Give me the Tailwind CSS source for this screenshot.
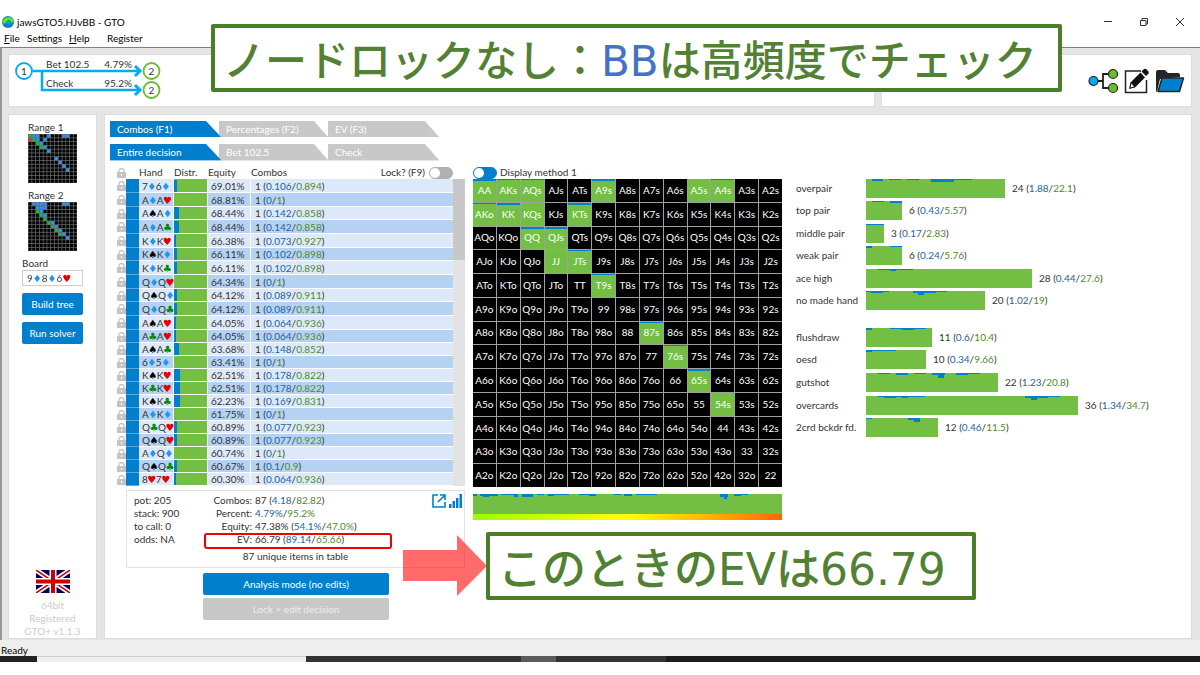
<!DOCTYPE html>
<html lang="ja">
<head>
  <meta charset="UTF-8">
  <meta name="viewport" content="width=device-width, initial-scale=1.0">
  <title>jawsGTO5.HJvBB - GTO</title>
  <script src="https://cdn.jsdelivr.net/npm/@tailwindcss/browser@4"></script>
</head>

<body class="relative bg-white min-h-screen flex flex-col pb-[13px] font-[Lato,'DejaVu_Sans','Noto_Sans_CJK_JP',sans-serif] text-[10px] leading-[13px] text-[#333]">

<!-- Shared symbols -->
<svg class="hidden">
  <symbol id="lock" viewBox="0 0 9 10"><path d="M2 5V3a2.5 2.5 0 0 1 5 0v2" fill="none" stroke="#c4c4c4" stroke-width="1.3"/><rect x="0" y="4" width="9" height="6" rx=".6" fill="#c4c4c4"/><rect x="4" y="6" width="1" height="2" fill="#fff"/></symbol>
</svg>

<!-- Title bar -->
<header class="pt-[14px]">
  <div class="flex items-center h-4 pl-[2px] pr-4">
    <svg class="w-3 h-3 mr-[3px]" viewBox="0 0 12 12"><circle cx="6" cy="6" r="6" fill="#0a7fd0"/><path d="M.3 6.500A6 6 0 0 1 11.900 5C10.500 7.500 9 7.500 8.500 5.500S5.500 4 4.500 6S1.500 8 .3 6.500z" fill="#5fe02c"/><path d="M5 7C5 5 8 5 8 7S5.500 9 5 7z" fill="#14a8c8"/></svg>
    <span class="text-black">jawsGTO5.HJvBB - GTO</span>
    <div class="ml-auto flex gap-[28px]">
      <button aria-label="Minimize"><svg class="w-2 h-2" viewBox="0 0 8 8"><path d="M0 3.500H8" stroke="#333"/></svg></button>
      <button aria-label="Restore"><svg class="w-2 h-2 overflow-visible" viewBox="0 0 8 8"><path d="M.5 2.500H6V7.500H.5zM2 2V.5H7.500V6H6" fill="none" stroke="#333"/></svg></button>
      <button aria-label="Close"><svg class="w-2 h-2" viewBox="0 0 8 8"><path d="M0 0L8 8M8 0L0 8" stroke="#333"/></svg></button>
    </div>
  </div>
  <nav class="flex items-center h-[17px] pl-1 text-black">
    <a href="#" class="w-[23px]"><u>F</u>ile</a>
    <a href="#" class="w-[42px]">Settings</a>
    <a href="#" class="w-[38px]"><u>H</u>elp</a>
    <a href="#">Register</a>
  </nav>
</header>

<!-- Workspace -->
<div class="flex-1 flex flex-col gap-[7px] bg-[#e5e5e5] border-t border-l-2 border-t-[#808080] border-l-[#999] pt-[6px] pl-[6px] pr-2 pb-px">

  <div class="flex gap-[6px]">
    <!-- Decision tree -->
    <section class="w-[867px] h-[53px] bg-white border border-[#ddd]">
      <svg class="w-[160px] h-[50px]" viewBox="9 55 160 50" font-size="10" fill="#333">
        <g fill="none" stroke="#00adef" stroke-width="2.500">
          <path d="M33 71H140M42 71V90H140"/>
          <path d="M135 66L140 71L135 76M135 85L140 90L135 95" stroke-width="3"/>
          <circle cx="24" cy="71" r="8" stroke-width="1.800"/>
        </g>
        <g fill="#fff" stroke="#6abd2e" stroke-width="1.800"><circle cx="151.500" cy="71" r="8"/><circle cx="151.500" cy="90" r="8"/></g>
        <text x="24" y="75" text-anchor="middle">1</text>
        <text x="151.500" y="75" text-anchor="middle">2</text>
        <text x="151.500" y="94" text-anchor="middle">2</text>
        <text x="46" y="68">Bet 102.5</text><text x="132" y="68" text-anchor="end">4.79%</text>
        <text x="46" y="87">Check</text><text x="132" y="87" text-anchor="end">95.2%</text>
      </svg>
    </section>

    <!-- Toolbar -->
    <section class="flex-1 flex items-center justify-end gap-[6px] pr-[6px] bg-white border border-[#ddd]">
      <button aria-label="Tree"><svg class="w-[30px] h-[26px]" viewBox="0 0 30 26"><path d="M8 13H15M21 6H15V20H21" fill="none" stroke="#222" stroke-width="1.800"/><circle cx="5.500" cy="13" r="4.500" fill="#00adef" stroke="#222" stroke-width="1.200"/><circle cx="25" cy="6" r="4.500" fill="#6abd2e" stroke="#222" stroke-width="1.200"/><circle cx="25" cy="20" r="4.500" fill="#6abd2e" stroke="#222" stroke-width="1.200"/></svg></button>
      <button aria-label="Edit"><svg class="w-[25px] h-[26px]" viewBox="0 0 25 26"><path d="M17 3H1.500V24.500H22.500V12" fill="none" stroke="#222" stroke-width="1.500"/><path d="M5 21L6.500 14.500L16.500 4.500L21 9.500L11 19.500z" fill="#111"/><path d="M17.500 3.500L20 1Q21 .3 22 1L24.500 3.500Q25 4.500 24.500 5.500L22 8z" fill="#111"/><path d="M6.500 19.500L7.500 15.500L10 18.500z" fill="#fff"/></svg></button>
      <button aria-label="Open"><svg class="w-[30px] h-[26px]" viewBox="0 0 30 26"><path d="M1 22V4Q1 2 3 2H10L13 5H23Q25 5 25 7V9L5 11L2 24Q1 24 1 22z" fill="#262626"/><path d="M7 10H28.500L24.500 23.500H3z" fill="#0080cc" stroke="#262626" stroke-width="1.500" stroke-linejoin="round"/></svg></button>
    </section>
  </div>

  <div class="flex-1 flex gap-[7px]">
    <!-- Sidebar -->
    <aside class="w-[89px] bg-white border border-[#ddd] px-[13px] pt-[6px] flex flex-col">
      <h2 class="pl-[6px]">Range 1</h2>
      <svg id="range1" class="w-[49px] h-[49px] ml-[6px]" viewBox="0 0 52 52"></svg>
      <h2 class="pl-[6px] mt-[6px]">Range 2</h2>
      <svg id="range2" class="w-[49px] h-[49px] ml-[6px]" viewBox="0 0 52 52"></svg>
      <label for="board" class="mt-[6px]">Board</label>
      <!-- the gradient colours the suits one by one -->
      <input id="board" type="text" value="9♦8♦6♥" class="w-full h-4 border border-[#ccc] pl-1 leading-[14px] text-transparent bg-clip-text bg-[linear-gradient(to_right,#333_10px,#1e96f5_10px,#1e96f5_19px,#333_19px,#333_25px,#1e96f5_25px,#1e96f5_34px,#333_34px,#333_40px,#e60000_40px)]">
      <button class="mt-[7px] h-[22px] rounded-[2px] bg-[#0080cc] text-white">Build tree</button>
      <button class="mt-[7px] h-[22px] rounded-[2px] bg-[#0080cc] text-white">Run solver</button>
      <div class="mt-auto text-center text-[#ccc] flex flex-col items-center">
        <svg class="w-[34px] h-[23px] mb-[6px]" viewBox="0 0 34 23">
          <path d="M0 0H34V23H0z" fill="#00005c"/>
          <path d="M0 0L34 23M34 0L0 23" stroke="#fff" stroke-width="5"/>
          <path d="M0 0L34 23M34 0L0 23" stroke="#d00000" stroke-width="1.500"/>
          <path d="M17 0V23M0 11.500H34" stroke="#fff" stroke-width="7"/>
          <path d="M17 0V23M0 11.500H34" stroke="#d00000" stroke-width="4"/>
        </svg>
        <p>64bit</p><p>Registered</p><p>GTO+ v1.1.3</p>
      </div>
    </aside>

    <!-- Analysis panel -->
    <main class="flex-1 bg-white border border-[#ddd] pt-[6px] pl-[5px]">
      <div class="flex text-white text-left">
        <button class="w-[109px] h-4 pl-[7px] text-left relative z-10"><svg class="absolute inset-0 w-[111px] h-4 -z-10" viewBox="0 0 111 16"><path d="M0 0H96L111 16H0z" fill="#0080cc"/></svg>Combos (F1)</button>
        <button class="w-[109px] h-4 pl-[7px] text-left bg-[#c8c8c8] [clip-path:polygon(0_0,95px_0,109px_100%,0_100%)]">Percentages (F2)</button>
        <button class="w-[111px] h-4 pl-[7px] text-left bg-[#c8c8c8] [clip-path:polygon(0_0,97px_0,111px_100%,0_100%)]">EV (F3)</button>
      </div>
      <div class="flex text-white text-left mt-[7px]">
        <button class="w-[109px] h-4 pl-[7px] text-left relative z-10"><svg class="absolute inset-0 w-[111px] h-4 -z-10" viewBox="0 0 111 16"><path d="M0 0H96L111 16H0z" fill="#0080cc"/></svg>Entire decision</button>
        <button class="w-[109px] h-4 pl-[7px] text-left bg-[#c8c8c8] [clip-path:polygon(0_0,95px_0,109px_100%,0_100%)]">Bet 102.5</button>
        <button class="w-[111px] h-4 pl-[7px] text-left bg-[#c8c8c8] [clip-path:polygon(0_0,97px_0,111px_100%,0_100%)]">Check</button>
      </div>
      <div class="w-[329px] h-px bg-[#e5e5e5]"><div class="w-[111px] h-px bg-[#9fcdf0]"></div></div>

      <div class="flex items-start mt-[5px]">
        <!-- Combos table -->
        <section class="w-[355px] mr-2">
          <div class="relative flex">
            <table class="w-[343px] table-fixed border-separate border-spacing-0 text-left whitespace-nowrap">
              <colgroup><col class="w-[16px]"><col class="w-[13px]"><col class="w-[35px]"><col class="w-[34px]"><col class="w-[43px]"><col></colgroup>
              <thead>
                <tr class="h-[13px]">
                  <th class="p-0"><svg class="block w-[9px] h-[10px] ml-[7px]"><use href="#lock"/></svg></th>
                  <th class="p-0"></th>
                  <th class="p-0 font-normal">Hand</th>
                  <th class="p-0 font-normal">Distr.</th>
                  <th class="p-0 font-normal">Equity</th>
                  <th class="p-0 font-normal">
                    <label class="flex items-center justify-between">Combos
                      <span class="flex items-center gap-1">Lock? (F9)
                        <input type="checkbox" class="appearance-none w-6 h-3 rounded-full bg-[#b0b0b0] border border-[#b0b0b0] before:block before:w-[10px] before:h-[10px] before:rounded-full before:bg-white">
                      </span>
                    </label>
                  </th>
                </tr>
              </thead>
              <tbody id="combos"></tbody>
            </table>
            <div class="w-3 mt-[13px] bg-[#e3e3e3]"><div class="h-[81px] bg-[#c8c8c8]"></div></div>
          </div>

          <!-- Summary -->
          <div class="relative ml-4 mt-1 h-[78px] border border-[#e3e3e3] pt-[3px] pl-[7px] flex">
            <div>
              <p>pot: 205</p><p>stack: 900</p><p>to call: 0</p><p>odds: NA</p>
            </div>
            <dl class="absolute left-[70px] top-[3px] grid grid-cols-[55px_1fr] gap-x-[3px]">
              <dt class="text-right">Combos:</dt><dd>87 (<span class="text-[#1b65a0]">4.18</span>/<span class="text-[#4f8a2c]">82.82</span>)</dd>
              <dt class="text-right">Percent:</dt><dd><span class="text-[#1b65a0]">4.79%</span>/<span class="text-[#4f8a2c]">95.2%</span></dd>
              <dt class="text-right">Equity:</dt><dd>47.38% (<span class="text-[#1b65a0]">54.1%</span>/<span class="text-[#4f8a2c]">47.0%</span>)</dd>
              <dt class="text-right">EV:</dt><dd>66.79 (<span class="text-[#1b65a0]">89.14</span>/<span class="text-[#4f8a2c]">65.66</span>)</dd>
            </dl>
            <p class="absolute inset-x-0 bottom-1 text-center">87 unique items in table</p>
            <div class="absolute left-[77px] top-[42px] w-[188px] h-4 border-2 border-[#f00000] rounded-[3px]"></div>
            <div class="absolute right-[2px] top-[3px] flex gap-[3px]">
              <button aria-label="Pop out"><svg class="w-[14px] h-[14px]" viewBox="0 0 14 14"><path d="M6 1H1V13H13V8M8 1H13V6M13 1L6 8" fill="none" stroke="#0080cc" stroke-width="1.600"/></svg></button>
              <button aria-label="Chart"><svg class="w-[13px] h-[14px]" viewBox="0 0 13 14"><path d="M0 10H2.500V14H0zM3.500 7H6V14H3.500zM7 4H9.500V14H7zM10.500 0H13V14H10.500z" fill="#0080cc"/></svg></button>
            </div>
          </div>
          <div class="w-[186px] ml-[93px] mt-[5px] flex flex-col gap-[3px]">
            <button class="h-[22px] rounded-[2px] bg-[#0080cc] text-white">Analysis mode (no edits)</button>
            <button class="h-[22px] rounded-[2px] bg-[#c8c8c8] text-[#eee]">Lock + edit decision</button>
          </div>
        </section>

        <!-- Hand matrix -->
        <section class="w-[309px] mr-[14px]">
          <label class="flex items-center gap-[3px] h-[13px]">
            <input type="checkbox" checked class="appearance-none w-6 h-3 rounded-full bg-[#0080cc] border border-[#0080cc] before:block before:w-[10px] before:h-[10px] before:rounded-full before:bg-white">
            Display method 1
          </label>
          <div id="matrix" class="grid grid-cols-13 grid-rows-13 gap-px h-[308px] bg-[#a0a0a0] text-white text-center"></div>
          <svg id="strip" class="mt-[7px] w-full h-[20px]" viewBox="0 0 309 20" preserveAspectRatio="none"><rect width="309" height="20" fill="#72bf44"/></svg>
          <div class="h-[6px] bg-linear-to-r from-[#98ff00] via-[#ffff00] to-[#ff6600]"></div>
        </section>

        <!-- Hand categories -->
        <section class="flex-1 mt-[11px]">
          <div id="made" class="grid auto-rows-fr h-[135px]"></div>
          <div id="draws" class="grid auto-rows-fr h-[113px] mt-[14px]"></div>
        </section>
      </div>
    </main>
  </div>
</div>

<!-- Status bar -->
<footer>
  <div class="h-4 bg-[#eee] pl-px leading-[20px] text-black">Ready</div>
  <div class="flex h-[6px] bg-[#1b1d20]"><div class="w-[37px] bg-[#222]"></div><div class="w-[269px] bg-[#eee] border-t border-[#ccc]"></div><div class="w-[215px] bg-[#333]"></div><div class="w-[35px] bg-[#5a5a5a]"></div><div class="w-[110px] bg-[#333]"></div></div>
</footer>

<!-- Callouts -->
<div class="absolute left-[211px] top-6 w-[851px] h-[68px] border-4 border-[#4a7f28] rounded-[2px] bg-white pl-2 pt-2 flex items-center whitespace-nowrap text-[42px] leading-[52px] font-medium text-[#528133] font-['DejaVu_Sans','Noto_Sans_CJK_JP',sans-serif]">
  <p>ノードロックなし：<span class="text-[#4472c4]">BB</span>は高頻度でチェック</p>
</div>
<svg class="absolute left-[403px] top-[535px] w-[84px] h-[62px]" viewBox="0 0 84 62"><path d="M0 15H54V0L84 31L54 61V46H0z" fill="#ff0000" fill-opacity=".58"/></svg>
<div class="absolute left-[486px] top-[532px] w-[490px] h-[68px] border-4 border-[#4a7f28] rounded-[2px] bg-white pl-2 pt-2 flex items-center whitespace-nowrap text-[44px] leading-[52px] font-medium text-[#528133] font-['DejaVu_Sans','Noto_Sans_CJK_JP',sans-serif]">
  <p>このときのEVは66.79</p>
</div>

<script>
const suits = {
  d: '<span class="text-[#1e96f5]">♦</span>',
  h: '<span class="text-[#e60000]">♥</span>',
  s: '<span class="text-black">♠</span>',
  c: '<span class="text-[#008c00]">♣</span>'
};

// "AdKh" -> ranks with coloured suits
function cards(text) {
  return text.replace(/[AKQJT2-9]|[dhsc]/g, s => suits[s]
    ? `<span class="flex justify-center w-2 font-['DejaVu_Sans',sans-serif] text-[10px] leading-[13px]">${suits[s]}</span>`
    : `<span>${s}</span>`);
}

function split(total, bet, check) {
  return `${total} (<span class="text-[#1b65a0]">${bet}</span>/<span class="text-[#4f8a2c]">${check}</span>)`;
}

// Combos table
const combos = [
  ['7d6d', '69.01', '0.106', '0.894'], ['AdAh', '68.81', '0', '1'], ['AsAd', '68.44', '0.142', '0.858'],
  ['AdAc', '68.44', '0.142', '0.858'], ['KdKh', '66.38', '0.073', '0.927'], ['KsKd', '66.11', '0.102', '0.898'],
  ['KdKc', '66.11', '0.102', '0.898'], ['QdQh', '64.34', '0', '1'], ['QsQd', '64.12', '0.089', '0.911'],
  ['QdQc', '64.12', '0.089', '0.911'], ['AsAh', '64.05', '0.064', '0.936'], ['AcAh', '64.05', '0.064', '0.936'],
  ['AsAc', '63.68', '0.148', '0.852'], ['6d5d', '63.41', '0', '1'], ['KsKh', '62.51', '0.178', '0.822'],
  ['KcKh', '62.51', '0.178', '0.822'], ['KsKc', '62.23', '0.169', '0.831'], ['AdKd', '61.75', '0', '1'],
  ['QcQh', '60.89', '0.077', '0.923'], ['QsQh', '60.89', '0.077', '0.923'], ['AdQd', '60.74', '0', '1'],
  ['QsQc', '60.67', '0.1', '0.9'], ['8h7h', '60.30', '0.064', '0.936']
];
document.getElementById('combos').innerHTML = combos.map(([hand, equity, bet, check], i) => {
  const height = i < 12 && i % 3 !== 2 ? 'h-[14px]' : 'h-[13px]';
  const shade = i % 2 ? 'bg-[#b5d2f2]' : 'bg-[#dde9f9]';
  return `<tr class="${height} leading-[12px]">
    <td class="p-0"><svg class="block w-[9px] h-[10px] ml-[7px]"><use href="#lock"/></svg></td>
    <td class="p-0 border-b border-[#5aa9dc] bg-[#0080cc]"></td>
    <td class="p-0 pl-[3px] border-b border-r border-white ${shade}"><div class="flex h-3">${cards(hand)}</div></td>
    <td class="p-0 border-b border-r border-white bg-[#72bf44]"><div class="h-3 bg-[#0080cc]" style="width:${bet * 100}%"></div></td>
    <td class="p-0 pl-[3px] border-b border-r border-white ${shade}">${equity}%</td>
    <td class="p-0 pl-1 border-b border-white ${shade}">${split(1, bet, check)}</td>
  </tr>`;
}).join('');

// Hand matrix, value is the blue height in pixels
const ranks = 'AKQJT98765432';
const played = { AA: 2, AKs: 1, AQs: 1, A9s: 2, A5s: 0, A4s: 1, AKo: 1, KK: 2, KQs: 0, KTs: 2, QQ: 2, QJs: 2, JJ: 0, JTs: 1, T9s: 1, '87s': 1, '76s': 1, '65s': 2, '54s': 0 };
let cells = '';
for (let r = 0; r < 13; r++) {
  for (let c = 0; c < 13; c++) {
    const name = r === c ? ranks[r] + ranks[r] : r < c ? ranks[r] + ranks[c] + 's' : ranks[c] + ranks[r] + 'o';
    cells += name in played
      ? `<div class="relative bg-[#72bf44] flex items-center justify-center"><i class="absolute inset-x-0 top-0 bg-[#0080cc]" style="height:${played[name]}px"></i>${name}</div>`
      : `<div class="bg-black flex items-center justify-center">${name}</div>`;
  }
}
document.getElementById('matrix').innerHTML = cells;

// Range thumbnails
function drawRange(id, colours) {
  let out = '<rect width="52" height="52" fill="#6a6a6a"/>';
  for (let r = 0; r < 13; r++) {
    for (let c = 0; c < 13; c++) {
      out += `<rect x="${c * 4 + .5}" y="${r * 4 + .5}" width="3.200" height="3.200" fill="${colours[r + ',' + c] || '#000'}"/>`;
    }
  }
  document.getElementById(id).innerHTML = out;
}
const B = '#2f8ff5', G = '#18b830', R = '#ff2828';
drawRange('range1', { '0,0': G, '0,1': B, '0,2': B, '0,5': B, '0,9': B, '0,10': B, '1,0': R, '1,1': G, '1,2': B, '1,4': B, '2,2': G, '2,3': B, '3,3': G, '3,4': B, '4,5': B, '6,7': B, '7,8': B, '8,9': B, '9,10': B });
drawRange('range2', { '0,1': B, '0,2': B, '0,3': B, '0,4': B, '0,9': B, '0,10': B, '1,2': B, '1,3': B, '1,4': B, '2,2': G, '2,3': B, '3,3': G, '3,4': B, '4,4': G, '5,5': G, '5,6': B, '6,6': G, '6,7': B, '7,7': G, '7,8': B, '8,8': G, '8,9': B, '9,10': B });

// Blue marks along the top of a bar: [x, width, height]
function marks(list) {
  return list.map(([x, w, h]) => `<rect x="${x}" width="${w}" height="${h}" fill="#0080cc"/>`).join('');
}
document.getElementById('strip').innerHTML += marks([[0, 4, 2], [7, 18, 2], [10, 6, 3], [28, 17, 1], [41, 4, 3], [49, 11, 3], [64, 7, 1], [74, 22, 1], [75, 6, 2], [106, 17, 1], [116, 7, 2], [141, 7, 1], [151, 8, 2], [163, 21, 1], [247, 8, 3], [251, 3, 5], [261, 14, 1], [261, 7, 2]]);

function drawBars(id, rows) {
  document.getElementById(id).innerHTML = rows.map(([name, width, total, bet, check, list]) => `
    <div class="flex items-center">
      <span class="w-[70px] whitespace-nowrap">${name}</span>
      <svg class="h-[19px] bg-[#72bf44] mr-[7px]" style="width:${width}px">${marks(list)}</svg>
      <span>${split(total, bet, check)}</span>
    </div>`).join('');
}
drawBars('made', [
  ['overpair', 139, 24, '1.88', '22.1', [[6, 11, 2], [23, 12, 1], [41, 12, 1], [64, 42, 1], [65, 23, 3]]],
  ['top pair', 36, 6, '0.43', '5.57', [[6, 12, 1], [24, 12, 2]]],
  ['middle pair', 18, 3, '0.17', '2.83', [[0, 18, 1]]],
  ['weak pair', 36, 6, '0.24', '5.76', [[0, 6, 2], [24, 12, 1]]],
  ['ace high', 166, 28, '0.44', '27.6', [[12, 35, 1], [24, 6, 2]]],
  ['no made hand', 119, 20, '1.02', '19', [[0, 23, 1], [5, 12, 2], [47, 34, 1], [47, 23, 2], [52, 6, 4]]]
]);
drawBars('draws', [
  ['flushdraw', 66, 11, '0.6', '10.4', [[0, 6, 2], [24, 36, 1], [36, 12, 2]]],
  ['oesd', 60, 10, '0.34', '9.66', [[0, 6, 2], [6, 24, 1]]],
  ['gutshot', 132, 22, '1.23', '20.8', [[12, 12, 1], [30, 12, 2], [48, 12, 1], [66, 13, 2], [72, 6, 5], [90, 24, 1], [90, 12, 2]]],
  ['overcards', 212, 36, '1.34', '34.7', [[12, 47, 1], [18, 12, 2], [36, 6, 2], [159, 35, 1], [159, 23, 2], [165, 6, 4]]],
  ['2crd bckdr fd.', 72, 12, '0.46', '11.5', [[0, 6, 1], [42, 12, 2], [48, 6, 4]]]
]);
</script>

</body>
</html>
